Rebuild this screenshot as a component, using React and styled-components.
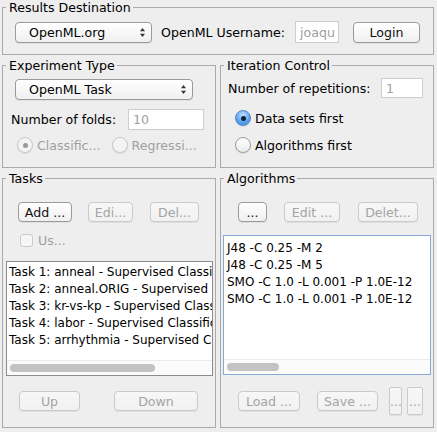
import styled, { createGlobalStyle } from "styled-components";

const GlobalStyle = createGlobalStyle`
  html, body {
    margin: 0;
    padding: 0;
    background: #eeeeee;
  }
  body {
    font-family: "DejaVu Sans", "Liberation Sans", sans-serif;
    font-size: 12.6px;
    color: #000;
  }
  * {
    box-sizing: border-box;
  }
`;

const Window = styled.div`
  width: 437px;
  height: 432px;
  overflow: hidden;
  background: #eeeeee;
  padding: 0 3px 0 2px;
  display: flex;
  flex-direction: column;
  gap: 3px;
`;

const Columns = styled.div`
  display: grid;
  grid-template-columns: 214px 214px;
  gap: 4px;
  height: ${(p) => p.h}px;
`;

const Group = styled.fieldset`
  margin: 0;
  padding: 0;
  min-width: 0;
  border: 1px solid #aaaaaa;
  height: ${(p) => p.h || "100%"}${(p) => (p.h ? "px" : "")};
`;

const Legend = styled.legend`
  margin-left: 3px;
  padding: 0 2px 0 3px;
  line-height: 15px;
  font-size: 12.6px;
`;

const Body = styled.div`
  display: flex;
  flex-direction: column;
  padding: ${(p) => p.pad};
`;

const Row = styled.div`
  display: flex;
  align-items: center;
  gap: ${(p) => p.gap || 0}px;
  margin: ${(p) => p.m || 0};
`;

const Label = styled.span`
  white-space: nowrap;
  color: ${(p) => (p.disabled ? "#a0a0a0" : "#000")};
`;

const Button = styled.button`
  font-family: inherit;
  font-size: 12.6px;
  width: ${(p) => p.w}px;
  height: ${(p) => p.h || 20}px;
  margin: 0;
  padding: 0;
  border-radius: 4px;
  white-space: nowrap;
  overflow: hidden;
  border: 1px solid ${(p) => (p.disabled ? "#cacaca" : "#9a9a9a")};
  color: ${(p) => (p.disabled ? "#a4a4a4" : "#111")};
  background: ${(p) =>
    p.disabled
      ? "linear-gradient(#f7f7f7, #f1f1f1)"
      : "linear-gradient(#ffffff, #f0f0f0)"};
  box-shadow: 0 1px 0 rgba(0, 0, 0, 0.06);
`;

const Combo = styled.div`
  width: ${(p) => p.w}px;
  height: 21px;
  margin-left: ${(p) => p.ml || 0}px;
  border: 1px solid #9a9a9a;
  border-radius: 4px;
  background: linear-gradient(#ffffff, #f0f0f0);
  box-shadow: 0 1px 0 rgba(0, 0, 0, 0.06);
  display: flex;
  align-items: center;
  justify-content: space-between;
  padding: 0 5px 0 13px;
`;

const Field = styled.div`
  width: ${(p) => p.w}px;
  height: ${(p) => p.h || 21}px;
  margin-left: ${(p) => p.ml || "0"};
  border: 1px solid #cdcdcd;
  background: #fff;
  color: #a0a0a0;
  padding-left: 4px;
  display: flex;
  align-items: center;
  overflow: hidden;
  white-space: nowrap;
`;

const RadioCircle = styled.span`
  width: 16px;
  height: 16px;
  border-radius: 50%;
  flex: none;
  display: flex;
  align-items: center;
  justify-content: center;
  border: 1px solid
    ${(p) => (p.disabled ? "#c8c8c8" : p.checked ? "#4f86c9" : "#9a9a9a")};
  background: ${(p) =>
    p.disabled
      ? "#f4f4f4"
      : p.checked
      ? "radial-gradient(circle at 50% 30%, #bfe0ff, #5aa2ee 60%, #3c86dc)"
      : "linear-gradient(#ffffff, #ececec)"};
  box-shadow: 0 1px 1px rgba(0, 0, 0, 0.08);
  &::after {
    content: "";
    display: ${(p) => (p.checked ? "block" : "none")};
    width: 5px;
    height: 5px;
    border-radius: 50%;
    background: ${(p) => (p.disabled ? "#9a9a9a" : "#10203a")};
  }
`;

const Radio = styled.div`
  display: flex;
  align-items: center;
  gap: ${(p) => p.gap || 4}px;
  margin: ${(p) => p.m || 0};
`;

const Check = styled.span`
  width: 13px;
  height: 13px;
  border-radius: 3px;
  border: 1px solid #cbcbcb;
  background: #f6f6f6;
  flex: none;
`;

const List = styled.div`
  width: ${(p) => p.w}px;
  height: ${(p) => p.h}px;
  margin: ${(p) => p.m};
  background: #fff;
  border: 1px solid ${(p) => (p.focused ? "#86a9d6" : "#8d8d8d")};
  display: flex;
  flex-direction: column;
  overflow: hidden;
`;

const Items = styled.div`
  flex: 1;
  padding: ${(p) => p.pt}px 0 0 ${(p) => p.pl}px;
  font-size: 12px;
  line-height: 17px;
  white-space: nowrap;
  overflow: hidden;
`;

const HScroll = styled.div`
  height: 15px;
  flex: none;
  border-top: 1px solid #ececec;
  background: #fbfbfb;
  display: flex;
  align-items: center;
  padding-left: 3px;
`;

const Thumb = styled.div`
  width: ${(p) => p.w}px;
  height: 8px;
  border-radius: 4px;
  background: #c3c3c3;
`;

const Arrows = () => (
  <svg width="7" height="11" viewBox="0 0 7 11">
    <path d="M3.5 1 L6 4.2 L1 4.2 Z" fill="#333" />
    <path d="M3.5 10 L6 6.8 L1 6.8 Z" fill="#333" />
  </svg>
);

const tasks = [
  "Task 1: anneal - Supervised Classification",
  "Task 2: anneal.ORIG - Supervised Classification",
  "Task 3: kr-vs-kp - Supervised Classification",
  "Task 4: labor - Supervised Classification",
  "Task 5: arrhythmia - Supervised Classification",
];

const algorithms = [
  "J48 -C 0.25 -M 2",
  "J48 -C 0.25 -M 5",
  "SMO -C 1.0 -L 0.001 -P 1.0E-12",
  "SMO -C 1.0 -L 0.001 -P 1.0E-12",
];

export default function App() {
  return (
    <>
      <GlobalStyle />
      <Window>
        <Group h={55}>
          <Legend>Results Destination</Legend>
          <Body pad="6px 0 0 12px">
            <Row>
              <Combo w={137}>
                <span>OpenML.org</span>
                <Arrows />
              </Combo>
              <Label style={{ marginLeft: 9 }}>OpenML Username:</Label>
              <Field w={44} h={22} ml="auto">
                joaqu
              </Field>
              <Button w={67} h={21} style={{ margin: "0 13px 0 14px" }}>
                Login
              </Button>
            </Row>
          </Body>
        </Group>

        <Columns h={110}>
          <Group>
            <Legend>Experiment Type</Legend>
            <Body pad="6px 11px 0 8px">
              <Combo w={178} ml={4}>
                <span>OpenML Task</span>
                <Arrows />
              </Combo>
              <Row m="9px 0 0 0">
                <Label>Number of folds:</Label>
                <Field w={76} ml="auto">
                  10
                </Field>
              </Row>
              <Row m="7px 0 0 6px" gap={11}>
                <Radio>
                  <RadioCircle checked disabled />
                  <Label disabled>Classific...</Label>
                </Radio>
                <Radio>
                  <RadioCircle disabled />
                  <Label disabled>Regressi...</Label>
                </Radio>
              </Row>
            </Body>
          </Group>

          <Group>
            <Legend>Iteration Control</Legend>
            <Body pad="5px 10px 0 7px">
              <Row>
                <Label>Number of repetitions:</Label>
                <Field w={42} h={20} ml="auto">
                  1
                </Field>
              </Row>
              <Radio m="12px 0 0 7px">
                <RadioCircle checked />
                <Label>Data sets first</Label>
              </Radio>
              <Radio m="11px 0 0 7px">
                <RadioCircle />
                <Label>Algorithms first</Label>
              </Radio>
            </Body>
          </Group>
        </Columns>

        <Columns h={257}>
          <Group>
            <Legend>Tasks</Legend>
            <Body pad="16px 0 0 0">
              <Row m="0 0 0 15px">
                <Button w={54}>Add ...</Button>
                <Button w={45} disabled style={{ marginLeft: 16 }}>
                  Edi...
                </Button>
                <Button w={49} disabled style={{ marginLeft: 17 }}>
                  Del...
                </Button>
              </Row>
              <Row m="11px 0 0 17px" gap={5}>
                <Check />
                <Label disabled>Us...</Label>
              </Row>
              <List w={207} h={115} m="13px 0 0 3px">
                <Items pt={2} pl={2}>
                  {tasks.map((t) => (
                    <div key={t}>{t}</div>
                  ))}
                </Items>
                <HScroll>
                  <Thumb w={145} />
                </HScroll>
              </List>
              <Row m="15px 0 0 16px">
                <Button w={61} disabled>
                  Up
                </Button>
                <Button w={84} disabled style={{ marginLeft: 34 }}>
                  Down
                </Button>
              </Row>
            </Body>
          </Group>

          <Group>
            <Legend>Algorithms</Legend>
            <Body pad="16px 0 0 0">
              <Row m="0 0 0 17px">
                <Button w={29}>...</Button>
                <Button w={56} disabled style={{ marginLeft: 17 }}>
                  Edit ...
                </Button>
                <Button w={60} disabled style={{ marginLeft: 18 }}>
                  Delet...
                </Button>
              </Row>
              <List w={208} h={140} m="13px 0 0 2px" focused>
                <Items pt={4} pl={3}>
                  {algorithms.map((a, i) => (
                    <div key={i}>{a}</div>
                  ))}
                </Items>
                <HScroll>
                  <Thumb w={52} />
                </HScroll>
              </List>
              <Row m="12px 0 0 17px">
                <Button w={62} disabled>
                  Load ...
                </Button>
                <Button w={61} disabled style={{ marginLeft: 17 }}>
                  Save ...
                </Button>
                <Button w={13} h={28} disabled style={{ marginLeft: 11, borderRadius: 2 }}>
                  ...
                </Button>
                <Button w={16} h={28} disabled style={{ marginLeft: 5, borderRadius: 2 }}>
                  ...
                </Button>
              </Row>
            </Body>
          </Group>
        </Columns>
      </Window>
    </>
  );
}
